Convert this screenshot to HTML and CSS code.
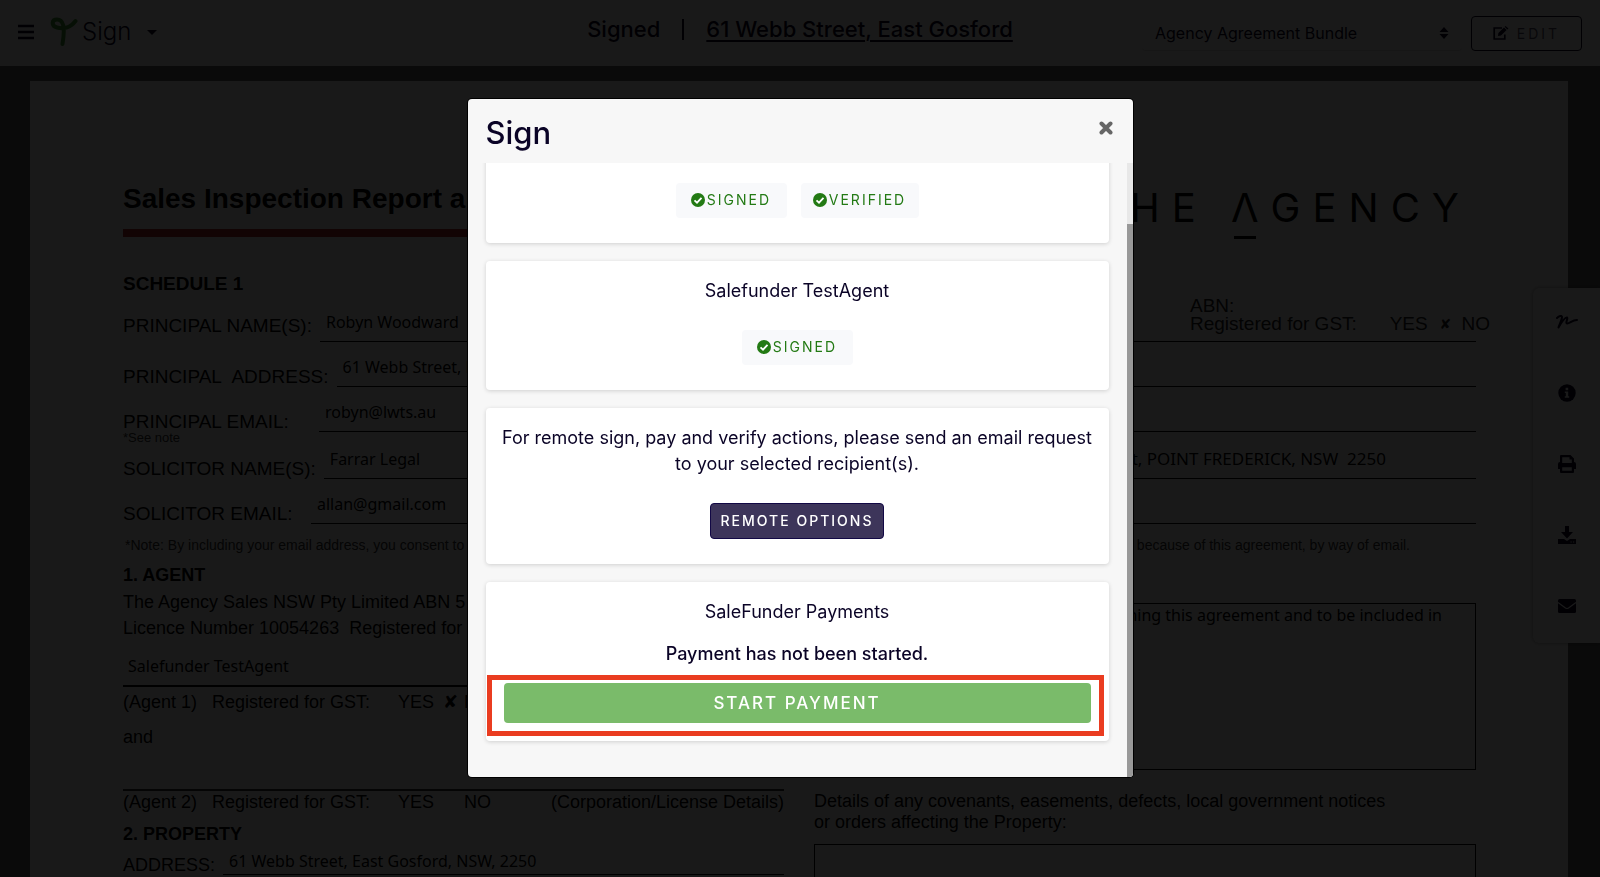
FILE: index.html
```
<!DOCTYPE html>
<html lang="en">
<head>
<meta charset="utf-8">
<title>Sign</title>
<link rel="stylesheet" href="styles.css">
</head>
<body>
<header class="topbar">
  <div class="brand">
    <button class="icon-button" type="button" aria-label="Menu">
      <svg width="16" height="16" viewBox="0 0 16 16"><path d="M0 2h16M0 8h16M0 14h16" stroke="currentColor" stroke-width="2.600"/></svg>
    </button>
    <button class="brand-button" type="button">
      <svg width="28" height="30" viewBox="0 0 28 30" fill="none" stroke="#3f9c35" stroke-width="4" stroke-linecap="round" stroke-linejoin="round"><path d="M25.500 4C21 10 14 12.500 7 10.500C1 9 1.500 2.500 7 2.500C13 2.500 15.500 9 12.500 27"/></svg>
      <span class="brand-name">Sign</span>
      <svg class="caret" width="10" height="5" viewBox="0 0 10 5"><path d="M0 0h10L5 5z" fill="currentColor"/></svg>
    </button>
  </div>
  <div class="status">
    <span>Signed</span>
    <span class="status-bar"></span>
    <a href="#property">61 Webb Street, East Gosford</a>
  </div>
  <div class="tools">
    <div class="picker">
      <select aria-label="Document"><option>Agency Agreement Bundle</option></select>
      <svg class="picker-arrows" width="10" height="12" viewBox="0 0 10 12"><path d="M5 0l4.500 5h-9zM5 12L.5 7h9z" fill="currentColor"/></svg>
    </div>
    <button class="edit" type="button">
      <svg width="16" height="14" viewBox="0 0 16 14"><path d="M9 2H1.200v11h10.600V8.500" fill="none" stroke="currentColor" stroke-width="1.700"/><path d="M5 10l.4-3L11 1.400l2.600 2.600L8 9.600zM11.700.8l.8-.8L15.500 2.600l-1.200 1z" fill="currentColor"/></svg>
      <span>EDIT</span>
    </button>
  </div>
</header>

<main class="sheet">
  <div class="sheet-head">
    <h1>Sales Inspection Report and</h1>
    <div class="agency">THE <span class="agency-a">Λ</span>GENCY</div>
  </div>

  <h2 class="schedule">SCHEDULE 1</h2>
  <div class="field field-first">
    <span class="label">PRINCIPAL NAME(S):</span>
    <div class="value"><span>Robyn Woodward</span>
      <div class="abn">
        <span>ABN:</span>
        <div class="gst"><span class="gst-label">Registered for GST:</span><span class="gst-yes">YES</span><span class="cross-small">✘</span><span>NO</span></div>
      </div>
    </div>
  </div>
  <div class="field">
    <span class="label">PRINCIPAL&nbsp; ADDRESS:</span>
    <div class="value"><span>61 Webb Street, East Gosford</span></div>
  </div>
  <div class="field">
    <span class="label">PRINCIPAL EMAIL:</span>
    <div class="value"><span>robyn@lwts.au</span></div>
  </div>
  <p class="hint">*See note</p>
  <div class="field field-tight">
    <span class="label">SOLICITOR NAME(S):</span>
    <div class="value"><span>Farrar Legal</span><span class="solicitor-address">Street, POINT FREDERICK, NSW&nbsp; 2250</span></div>
  </div>
  <div class="field">
    <span class="label label-short">SOLICITOR EMAIL:</span>
    <div class="value"><span>allan@gmail.com</span></div>
  </div>
  <p class="note"><span>*Note: By including your email address, you consent to</span><span>because of this agreement, by way of email.</span></p>

  <div class="columns">
    <section class="left">
      <h2>1. AGENT</h2>
      <p class="para">The Agency Sales NSW Pty Limited ABN 5<br>Licence Number 10054263&nbsp; Registered for</p>
      <div class="agent-name">Salefunder TestAgent</div>
      <div class="agent"><span class="agent-id">(Agent 1)</span><span class="agent-gst">Registered for GST:</span><span class="agent-yes">YES</span><span class="cross">✘</span><span>NO</span></div>
      <p class="and">and</p>
      <div class="agent agent-second"><span class="agent-id">(Agent 2)</span><span class="agent-gst">Registered for GST:</span><span class="agent-yes">YES</span><span class="cross"></span><span>NO</span><span class="agent-corp">(Corporation/License Details)</span></div>
      <h2 id="property">2. PROPERTY</h2>
      <div class="field field-property">
        <span class="label">ADDRESS:</span>
        <div class="value"><span>61 Webb Street, East Gosford, NSW, 2250</span></div>
      </div>
    </section>
    <section class="right">
      <div class="box"><span>concerning this agreement and to be included in</span></div>
      <p class="covenants">Details of any covenants, easements, defects, local government notices<br>or orders affecting the Property:</p>
      <div class="box"></div>
    </section>
  </div>
</main>

<nav class="rail" aria-label="Document actions">
  <button type="button" aria-label="Signature"><svg width="22" height="14" viewBox="0 0 22 14" fill="none" stroke="currentColor" stroke-width="2" stroke-linecap="round" stroke-linejoin="round"><path d="M1 3C3 1 6 0 6 2C6 5 3 10 2.500 12.500C5 8 9 2 11 2.500C12.500 3 9 8 11 8.500C13.500 9 16 5 21 5"/></svg></button>
  <button type="button" aria-label="Information"><svg width="18" height="18" viewBox="0 0 18 18"><circle cx="9" cy="9" r="8.700" fill="currentColor"/><path d="M7.600 3.800h2.600v2.400H7.600zM6.800 7.400h3.400v4.800h1v1.600H6.800v-1.600h1V9h-1z" fill="#fff"/></svg></button>
  <button type="button" aria-label="Print"><svg width="18" height="18" viewBox="0 0 18 18"><path fill-rule="evenodd" fill="currentColor" d="M2 1a1 1 0 0 1 1-1h9.500L16 3.500V7a2 2 0 0 1 2 2v4.500a.5.500 0 0 1-.5.500H16v3a1 1 0 0 1-1 1H3a1 1 0 0 1-1-1v-3H.5a.5.500 0 0 1-.5-.5V9a2 2 0 0 1 2-2zM4.200 2.200V8h9.600V4.500h-2.300V2.200zM4.200 12.300v3.500h9.600v-3.500z"/></svg></button>
  <button type="button" aria-label="Download"><svg width="18" height="18" viewBox="0 0 18 18"><path fill="currentColor" d="M7 0h4v6h4L9 12.500 3 6h4zM0 13h6l3 2 3-2h6v5H0z"/><path d="M12.500 16h1.200M15 16h1.200" stroke="#fff"/></svg></button>
  <button type="button" aria-label="Email"><svg width="18" height="14" viewBox="0 0 18 14"><rect width="18" height="14" rx="1.500" fill="currentColor"/><path d="M0 3.500l7.500 5.500q1.500 1 3 0L18 3.500" fill="none" stroke="#fff" stroke-width="1.200"/></svg></button>
</nav>

<div class="backdrop">
  <div class="modal" role="dialog" aria-modal="true" aria-labelledby="modal-title">
    <div class="modal-head">
      <h2 id="modal-title" class="modal-title">Sign</h2>
      <button class="close" type="button" aria-label="Close"><svg width="14" height="14" viewBox="0 0 14 14"><path d="M2.500 2.500l9 9M11.500 2.500l-9 9" stroke="currentColor" stroke-width="4" stroke-linecap="round"/></svg></button>
    </div>
    <div class="modal-body">
      <div class="scroller">
        <div class="cards">
          <section class="card card-first">
            <div class="badges">
              <span class="badge"><svg width="14" height="14" viewBox="0 0 14 14"><circle cx="7" cy="7" r="7" fill="#237a14"/><path d="M3.500 7.300L6 9.700l4.500-4.800" fill="none" stroke="#fff" stroke-width="1.800"/></svg>SIGNED</span>
              <span class="badge badge-verified"><svg width="14" height="14" viewBox="0 0 14 14"><circle cx="7" cy="7" r="7" fill="#237a14"/><path d="M3.500 7.300L6 9.700l4.500-4.800" fill="none" stroke="#fff" stroke-width="1.800"/></svg>VERIFIED</span>
            </div>
          </section>
          <section class="card">
            <p>Salefunder TestAgent</p>
            <div class="badges">
              <span class="badge"><svg width="14" height="14" viewBox="0 0 14 14"><circle cx="7" cy="7" r="7" fill="#237a14"/><path d="M3.500 7.300L6 9.700l4.500-4.800" fill="none" stroke="#fff" stroke-width="1.800"/></svg>SIGNED</span>
            </div>
          </section>
          <section class="card card-remote">
            <p>For remote sign, pay and verify actions, please send an email request to your selected recipient(s).</p>
            <button class="remote" type="button">REMOTE OPTIONS</button>
          </section>
          <section class="card card-payment">
            <p>SaleFunder Payments</p>
            <p class="pending">Payment has not been started.</p>
            <button class="start" type="button">START PAYMENT</button>
            <span class="highlight"></span>
          </section>
        </div>
      </div>
      <div class="track"><div class="thumb"></div></div>
    </div>
  </div>
</div>
</body>
</html>
```

FILE: styles.css
```
* { box-sizing: border-box; }

body {
  display: flex;
  flex-direction: column;
  margin: 0;
  height: 100vh;
  overflow: hidden;
  background: #666;
  color: #0a0326;
  font-family: Inter, "Noto Sans", sans-serif;
  font-size: 17px;
}

h1, h2, p { margin: 0; }
button, select { font: inherit; color: inherit; background: none; border: 0; padding: 0; }
svg { display: block; flex: none; }

/* Top bar */
.topbar {
  display: grid;
  flex: none;
  grid-template-columns: 1fr auto 1fr;
  align-items: center;
  height: 66px;
  padding: 0 18px;
  background: #fff;
}
.brand { display: flex; align-items: center; gap: 16px; padding-bottom: 2px; }
.brand-button { display: flex; align-items: center; gap: 4px; }
.brand-name { font-size: 24px; font-weight: 300; line-height: 30px; }
.caret { margin-left: 12px; }
.status { display: flex; align-items: center; gap: 22px; font-size: 22px; font-weight: 500; line-height: 28px; padding-bottom: 8px; }
.status-bar { width: 2px; height: 21px; background: currentColor; }
.status a { color: inherit; text-decoration-thickness: 2px; text-underline-offset: 3px; }
.tools { display: flex; justify-content: flex-end; gap: 9px; }
.picker { position: relative; width: 320px; }
.picker select {
  appearance: none;
  width: 100%;
  height: 35px;
  padding: 0 30px 0 13px;
  border-bottom: 1px solid #ddd;
  border-radius: 4px;
  font-size: 16px;
}
.picker-arrows { position: absolute; right: 13px; top: 11px; pointer-events: none; }
.edit {
  display: flex;
  align-items: center;
  justify-content: center;
  gap: 8px;
  width: 111px;
  height: 35px;
  border: 1px solid #0a0326;
  border-radius: 4px;
  font-size: 14px;
  letter-spacing: 3px;
}
.edit span { opacity: .7; }

/* Document */
.sheet {
  flex: 1;
  min-height: 0;
  overflow: hidden;
  margin: 15px 32px 0 30px;
  padding: 101px 92px 0 93px;
  background: #fff;
  color: #000;
  font-family: "Liberation Sans", Arial, sans-serif;
  font-size: 18px;
  line-height: 20px;
}
.sheet-head { display: flex; justify-content: space-between; align-items: flex-start; margin-bottom: 37px; }
.sheet h1 { width: 48%; padding-bottom: 13px; border-bottom: 8px solid #b8312b; font-size: 28px; line-height: 34px; }
.agency { padding-right: 5px; font-family: Inter, sans-serif; font-weight: 400; font-size: 40px; line-height: 52px; letter-spacing: 12px; }
.agency-a { position: relative; }
.agency-a::after { content: ""; position: absolute; left: 3px; bottom: -7px; width: 22px; height: 3px; background: #000; }
.sheet h2 { font-size: 18px; line-height: 20px; }
.sheet .schedule { font-size: 19px; }

.field { display: flex; align-items: flex-end; gap: 8px; padding-top: 14px; }
.field-first { padding-top: 4px; }
.field-first .label { padding-bottom: 6px; }
.field-tight { padding-top: 0; }
.label { min-width: 188px; font-size: 19px; white-space: nowrap; }
.label-short { min-width: 180px; }
.value {
  display: flex;
  flex: 1;
  justify-content: space-between;
  align-items: flex-end;
  padding: 0 0 8px 6px;
  border-bottom: 1px solid #000;
  font-family: "Noto Sans", sans-serif;
  font-size: 16px;
  line-height: 22px;
  white-space: nowrap;
}
.field-property { padding-top: 6px; }
.field-property .label { min-width: 0; font-size: 18px; }
.field-property .value { padding-bottom: 2px; }
.solicitor-address { padding-right: 90px; font-size: 17px; }
.abn { margin-right: -14px; width: 300px; font-family: "Liberation Sans", Arial, sans-serif; font-size: 19px; line-height: 18px; color: #222; }
.gst { display: flex; }
.gst-label { width: 200px; }
.gst-yes { width: 50px; }
.cross-small { width: 22px; font-family: "DejaVu Sans", sans-serif; font-size: 14px; }
.field-first { padding-top: 3px; }
.hint { font-size: 13px; line-height: 12px; padding-bottom: 4px; color: #333; }
.note { display: flex; justify-content: space-between; padding: 13px 66px 12px 2px; font-size: 14px; line-height: 16px; color: #333; }

.columns { display: grid; grid-template-columns: 661px 1fr; gap: 30px; }
.para { padding-top: 4px; line-height: 26px; }
.agent-name { padding: 13px 0 7px 5px; border-bottom: 2px solid #000; font-family: "Noto Sans", sans-serif; font-size: 16px; line-height: 24px; }
.agent { display: flex; padding-top: 5px; white-space: nowrap; }
.agent-id { width: 89px; }
.agent-gst { width: 186px; }
.agent-yes { width: 45px; }
.cross { width: 21px; font-family: "DejaVu Sans", sans-serif; }
.agent-corp { margin-left: auto; }
.and { padding: 15px 0 42px; }
.agent-second { border-top: 2px solid #333; padding-top: 1px; padding-bottom: 12px; }
.right { padding-top: 38px; }
.box { min-height: 167px; padding: 0 33px 0 10px; border: 1px solid #000; text-align: right; font-family: "Noto Sans", sans-serif; font-size: 16px; line-height: 22px; }
.covenants { padding: 21px 0 11px; line-height: 21px; }

/* Side rail */
.rail {
  position: fixed;
  right: 0;
  top: 288px;
  display: flex;
  flex-direction: column;
  width: 67px;
  background: #fff;
  border-radius: 6px 0 0 6px;
  box-shadow: 0 0 4px rgba(0, 0, 0, .4);
}
.rail button { display: flex; align-items: center; justify-content: center; height: 71px; padding-bottom: 4px; }

/* Dialog */
.backdrop {
  position: fixed;
  inset: 0;
  display: flex;
  align-items: center;
  justify-content: center;
  background: rgba(0, 0, 0, .9);
}
.modal {
  display: flex;
  flex-direction: column;
  width: 665px;
  max-width: 100%;
  max-height: calc(100vh - 199px);
  margin-bottom: 1px;
  overflow: hidden;
  background: #f7f7f7;
  border-radius: 4px;
  box-shadow: 0 0 0 1px #000;
}
.modal-head { display: flex; align-items: flex-start; justify-content: space-between; padding: 14px 20px 10px 18px; }
.modal-title { font-size: 31px; font-weight: 500; line-height: 40px; }
.close { padding-top: 8px; color: #666; }
.modal-body { display: flex; min-height: 0; }
.scroller { display: flex; flex: 1; flex-direction: column-reverse; overflow-y: auto; scrollbar-width: none; }
.cards { display: flex; flex-direction: column; gap: 18px; padding: 18px 18px 36px; }
.track { width: 6px; background: #e8e8e8; }
.thumb { height: 90%; margin-top: 61px; background: #999; }
.card {
  position: relative;
  display: flex;
  flex-direction: column;
  align-items: center;
  gap: 26px;
  padding: 17px 18px 25px;
  background: #fff;
  border-radius: 4px;
  box-shadow: 0 1px 4px rgba(0, 0, 0, .16);
  font-size: 18px;
  line-height: 26px;
  text-align: center;
}
.card-first { padding-top: 69px; }
.card-remote { padding-left: 12px; padding-right: 12px; }
.badges { display: flex; gap: 14px; }
.badge {
  display: flex;
  align-items: center;
  justify-content: center;
  gap: 2px;
  width: 111px;
  height: 35px;
  padding-bottom: 1px;
  border-radius: 4px;
  background: #f8f9fb;
  color: #237a14;
  font-size: 14px;
  letter-spacing: 2px;
}
.badge-verified { width: 118px; }
.remote {
  height: 36px;
  padding: 0 10px;
  border: 1px solid #120845;
  border-radius: 4px;
  background: #3d355a;
  color: #fff;
  font-size: 14px;
  font-weight: 500;
  letter-spacing: 2px;
}
.card-payment { gap: 16px; padding-bottom: 18px; }
.pending { font-weight: 500; }
.start {
  width: 100%;
  height: 40px;
  border-radius: 4px;
  background: #7abb6a;
  color: #fff;
  font-size: 17px;
  font-weight: 500;
  letter-spacing: 2px;
}
.highlight { position: absolute; inset: 93px 5px 5px 1px; border: 5px solid #ea3c20; pointer-events: none; }
```
